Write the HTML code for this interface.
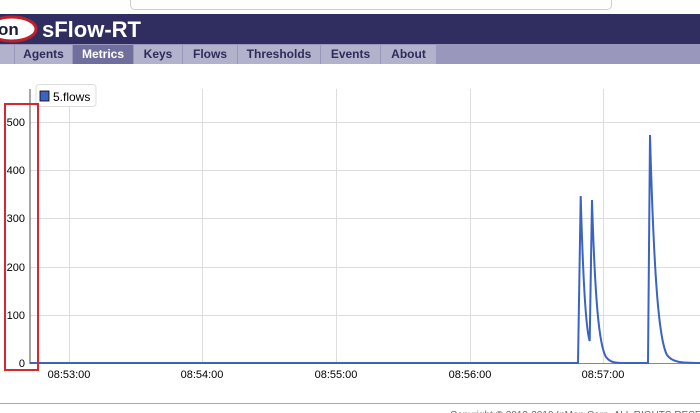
<!DOCTYPE html>
<html><head><style>
body{margin:0;width:700px;height:413px;overflow:hidden;background:#fff;font-family:"Liberation Sans",sans-serif;position:relative}
.top{position:absolute;left:0;top:0;width:700px;height:14px;background:#fff}
.addr{position:absolute;left:130px;top:-10px;width:480px;height:18px;border:1px solid #ccc;border-radius:5px}
.hdr{position:absolute;left:0;top:14px;width:700px;height:30px;background:#302e60}
.title{position:absolute;left:42px;top:17px;color:#fff;font-size:22px;font-weight:bold;letter-spacing:0}
.nav{position:absolute;left:0;top:44px;width:700px;height:20px;background:#9997bb}
.tab{position:absolute;top:1px;height:19px;background:#b3b2cd;color:#2d2b59;font-size:12px;font-weight:bold;line-height:19px;text-align:center;border-right:1px solid #9997bb}
.foot{position:absolute;left:0;top:403px;width:700px;border-top:1px solid #aaa}
</style></head><body>
<div class="top"><div class="addr"></div></div>
<div class="hdr"></div>
<svg style="position:absolute;left:0;top:14px" width="42" height="30"><ellipse cx="12" cy="15" rx="24" ry="12" fill="#fff" stroke="#c0202a" stroke-width="3"/><text x="-2" y="21" font-family="Liberation Sans" font-weight="bold" font-size="17" fill="#1b1b3a">on</text></svg>
<div class="title">sFlow-RT</div>
<div class="nav">
<div class="tab" style="left:0;width:14px"></div>
<div class="tab" style="left:15px;width:57px">Agents</div>
<div class="tab" style="left:73px;width:60px;background:#706e9c;color:#fff">Metrics</div>
<div class="tab" style="left:134px;width:48px">Keys</div>
<div class="tab" style="left:183px;width:54px">Flows</div>
<div class="tab" style="left:238px;width:82px">Thresholds</div>
<div class="tab" style="left:321px;width:59px">Events</div>
<div class="tab" style="left:381px;width:55px">About</div>
</div>
<svg style="position:absolute;left:0;top:0" width="700" height="413" font-family="Liberation Sans" font-size="11">
<g stroke="#ddd" stroke-width="1">
<line x1="30" y1="122.5" x2="700" y2="122.5"/><line x1="30" y1="170.5" x2="700" y2="170.5"/><line x1="30" y1="218.5" x2="700" y2="218.5"/><line x1="30" y1="267.5" x2="700" y2="267.5"/><line x1="30" y1="315.5" x2="700" y2="315.5"/>
<line x1="69.5" y1="89" x2="69.5" y2="363"/><line x1="202.5" y1="89" x2="202.5" y2="363"/><line x1="336.5" y1="89" x2="336.5" y2="363"/><line x1="470.5" y1="89" x2="470.5" y2="363"/><line x1="603.5" y1="89" x2="603.5" y2="363"/>
</g>
<line x1="30" y1="89" x2="30" y2="364" stroke="#888" stroke-width="1.5"/>
<line x1="30" y1="363.5" x2="700" y2="363.5" stroke="#888"/>
<g fill="#000" text-anchor="end">
<text x="25" y="126">500</text><text x="25" y="174">400</text><text x="25" y="222">300</text><text x="25" y="271">200</text><text x="25" y="319">100</text><text x="25" y="367">0</text>
</g>
<g fill="#000" text-anchor="middle">
<text x="69" y="378">08:53:00</text><text x="202" y="378">08:54:00</text><text x="336" y="378">08:55:00</text><text x="470" y="378">08:56:00</text><text x="603" y="378">08:57:00</text>
</g>
<path d="M30 363 L578 363 L580.7 196 C583 280 586 330 589.7 341 L592 200 C595 300 599 345 606 357 C610 362 614 363 622 363 L648 363 L650 135 C654 280 659 340 667 355 C672 362 680 363 700 363" fill="none" stroke="#3b63c4" stroke-width="2"/>
<rect x="36" y="84.5" width="60" height="22" rx="3" fill="#fff" stroke="#ddd"/>
<rect x="40" y="91" width="9" height="10" fill="#3b63c4" stroke="#000" stroke-width="0.8"/>
<text x="53" y="101" font-size="12">5.flows</text>
<rect x="5" y="104" width="33" height="266" fill="none" stroke="#d6282e" stroke-width="2"/>
<text x="450" y="418" font-size="10" fill="#666">Copyright © 2012-2019 InMon Corp. ALL RIGHTS RESERVED</text>
</svg>
<div class="foot"></div>
</body></html>
